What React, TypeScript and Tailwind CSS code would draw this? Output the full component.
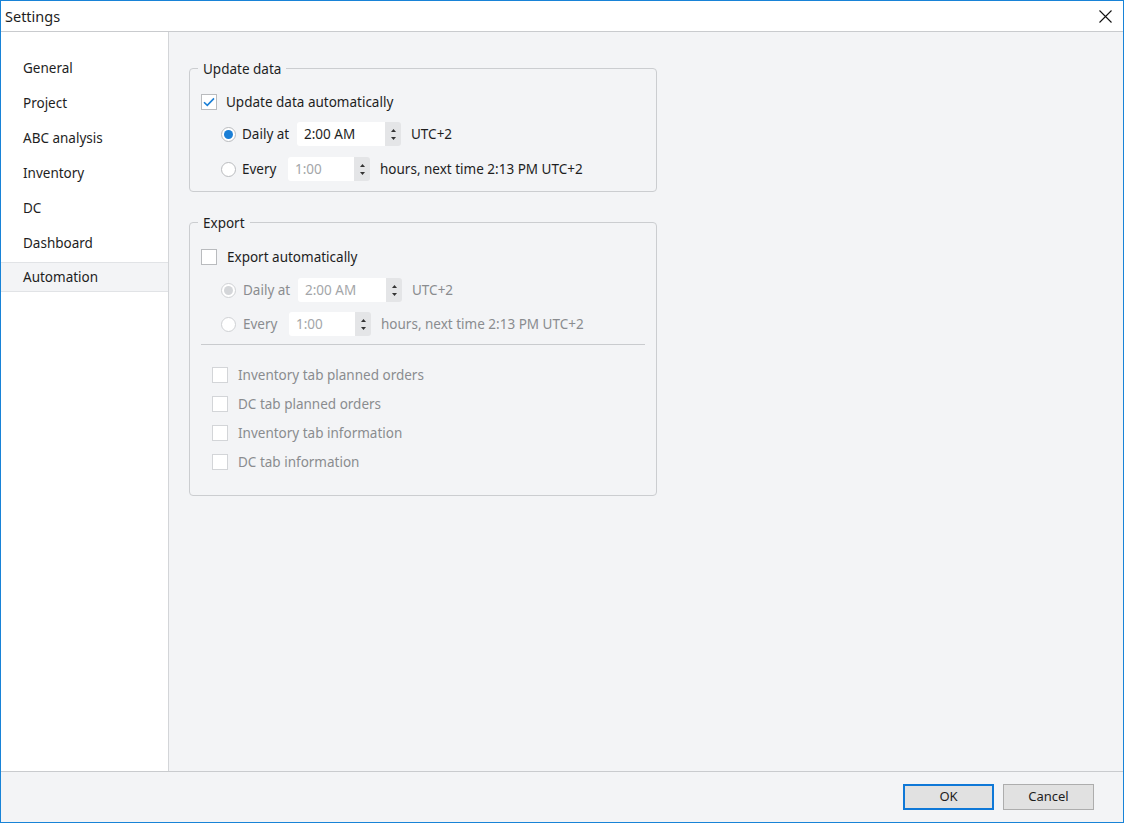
import React from 'react';

const font = { fontFamily: '"Noto Sans", "Open Sans", sans-serif' };

function Check({ checked, disabled }: { checked?: boolean; disabled?: boolean }) {
  return (
    <div
      className={`w-4 h-4 border bg-white flex items-center justify-center shrink-0 ${
        disabled ? 'border-[#d3d5d8]' : 'border-[#b9bbbe]'
      }`}
    >
      {checked && (
        <svg width="12" height="10" viewBox="0 0 12 10">
          <path d="M1 5.2 L4.3 8.4 L11 1.4" fill="none" stroke="#1b7fd6" strokeWidth="1.6" />
        </svg>
      )}
    </div>
  );
}

function Radio({ on, disabled }: { on?: boolean; disabled?: boolean }) {
  return (
    <div
      className={`w-[15px] h-[15px] rounded-full border flex items-center justify-center shrink-0 ${
        disabled ? 'border-[#cfd1d4] bg-white' : 'border-[#b9bbbe] bg-white'
      }`}
    >
      {on && <div className={`w-[9px] h-[9px] rounded-full ${disabled ? 'bg-[#d4d6d9]' : 'bg-[#1b7fd6]'}`} />}
    </div>
  );
}

function Spin({ value, w, dim }: { value: string; w: string; dim?: boolean }) {
  return (
    <div className={`flex h-6 rounded-[3px] overflow-hidden ${w}`}>
      <div className={`flex-1 bg-white flex items-center pl-[7px] ${dim ? 'text-[#a4a6a9]' : 'text-[#1e1e1e]'}`}>
        {value}
      </div>
      <div className="w-4 bg-[#e4e5e7] flex flex-col items-center justify-center gap-[5px]">
        <svg width="5" height="3" viewBox="0 0 5 3"><path d="M0 3 L2.5 0 L5 3 Z" fill="#333" /></svg>
        <svg width="5" height="3" viewBox="0 0 5 3"><path d="M0 0 L2.5 3 L5 0 Z" fill="#333" /></svg>
      </div>
    </div>
  );
}

function Group({ title, children, className }: { title: string; children: React.ReactNode; className?: string }) {
  return (
    <div className={`relative border border-[#cbcdd0] rounded-[4px] w-[468px] ${className ?? ''}`}>
      <div className="absolute -top-[10px] left-[8px] px-[5px] bg-[#f3f4f6] text-[#1e1e1e] leading-5">{title}</div>
      {children}
    </div>
  );
}

export default function App() {
  const items = ['General', 'Project', 'ABC analysis', 'Inventory', 'DC', 'Dashboard'];
  const dim = 'text-[#8a8c8f]';
  return (
    <div className="w-[1124px] h-[828px] bg-white text-[13.5px]" style={font}>
      <div className="w-[1124px] h-[823px] border border-[#1883d7] flex flex-col bg-[#f3f4f6]">
        {/* title bar */}
        <div className="h-[31px] bg-white border-b border-[#c9cbce] flex items-center justify-between pl-[4px] pr-[11px]">
          <span className="text-[14.5px] text-[#1e1e1e] mt-[1px]">Settings</span>
          <svg width="13" height="13" viewBox="0 0 13 13">
            <path d="M0.5 0.5 L12.5 12.5 M12.5 0.5 L0.5 12.5" stroke="#111" strokeWidth="1.1" />
          </svg>
        </div>

        <div className="flex flex-1 min-h-0">
          {/* sidebar */}
          <div className="w-[168px] bg-white border-r border-[#d3d5d8] pt-[19px] text-[#1e1e1e]">
            {items.map((it) => (
              <div key={it} className="h-[35px] flex items-center pl-[22px]">
                {it}
              </div>
            ))}
            <div className="h-[30px] mt-[1px] flex items-center pl-[22px] bg-[#f3f4f6] border-y border-[#e1e3e6]">
              Automation
            </div>
          </div>

          {/* content */}
          <div className="flex-1 pl-[20px] pt-[36px] text-[#1e1e1e]">
            <Group title="Update data" className="h-[124px]">
              <div className="pl-[11px] pt-[23px] h-[20px] box-content flex items-center gap-[9px]">
                <Check checked />
                <span>Update data automatically</span>
              </div>
              <div className="pl-[31px] mt-[10px] h-6 flex items-center">
                <Radio on />
                <span className="ml-[6px] w-[55px]">Daily at</span>
                <Spin value="2:00 AM" w="w-[104px]" />
                <span className="ml-[10px]">UTC+2</span>
              </div>
              <div className="pl-[31px] mt-[11px] h-6 flex items-center">
                <Radio />
                <span className="ml-[6px] w-[46px]">Every</span>
                <Spin value="1:00" w="w-[82px]" dim />
                <span className="ml-[10px]">hours, next time 2:13 PM UTC+2</span>
              </div>
            </Group>

            <Group title="Export" className="h-[274px] mt-[30px]">
              <div className="pl-[11px] pt-[24px] h-[20px] box-content flex items-center gap-[10px]">
                <Check />
                <span>Export automatically</span>
              </div>
              <div className={`pl-[31px] mt-[11px] h-6 flex items-center ${dim}`}>
                <Radio on disabled />
                <span className="ml-[7px] w-[55px]">Daily at</span>
                <Spin value="2:00 AM" w="w-[104px]" dim />
                <span className="ml-[10px]">UTC+2</span>
              </div>
              <div className={`pl-[31px] mt-[10px] h-6 flex items-center ${dim}`}>
                <Radio disabled />
                <span className="ml-[7px] w-[46px]">Every</span>
                <Spin value="1:00" w="w-[82px]" dim />
                <span className="ml-[10px]">hours, next time 2:13 PM UTC+2</span>
              </div>
              <div className="mx-[11px] mt-[8px] border-t border-[#c9cbce]" />
              <div className={`pl-[22px] pt-[22px] flex flex-col gap-[13px] ${dim}`}>
                {['Inventory tab planned orders', 'DC tab planned orders', 'Inventory tab information', 'DC tab information'].map((t) => (
                  <div key={t} className="flex items-center gap-[10px] h-4">
                    <Check disabled />
                    <span>{t}</span>
                  </div>
                ))}
              </div>
            </Group>
          </div>
        </div>

        {/* footer */}
        <div className="h-[51px] border-t border-[#c9cbce] flex items-start justify-end gap-[9px] pr-[29px] pt-[12px]">
          <button className="w-[91px] h-[26px] bg-[#e1e1e1] border-2 border-[#0f78d7] text-[13px] text-[#1e1e1e]">OK</button>
          <button className="w-[91px] h-[26px] bg-[#e1e1e1] border border-[#adadad] text-[13px] text-[#1e1e1e]">Cancel</button>
        </div>
      </div>
    </div>
  );
}
